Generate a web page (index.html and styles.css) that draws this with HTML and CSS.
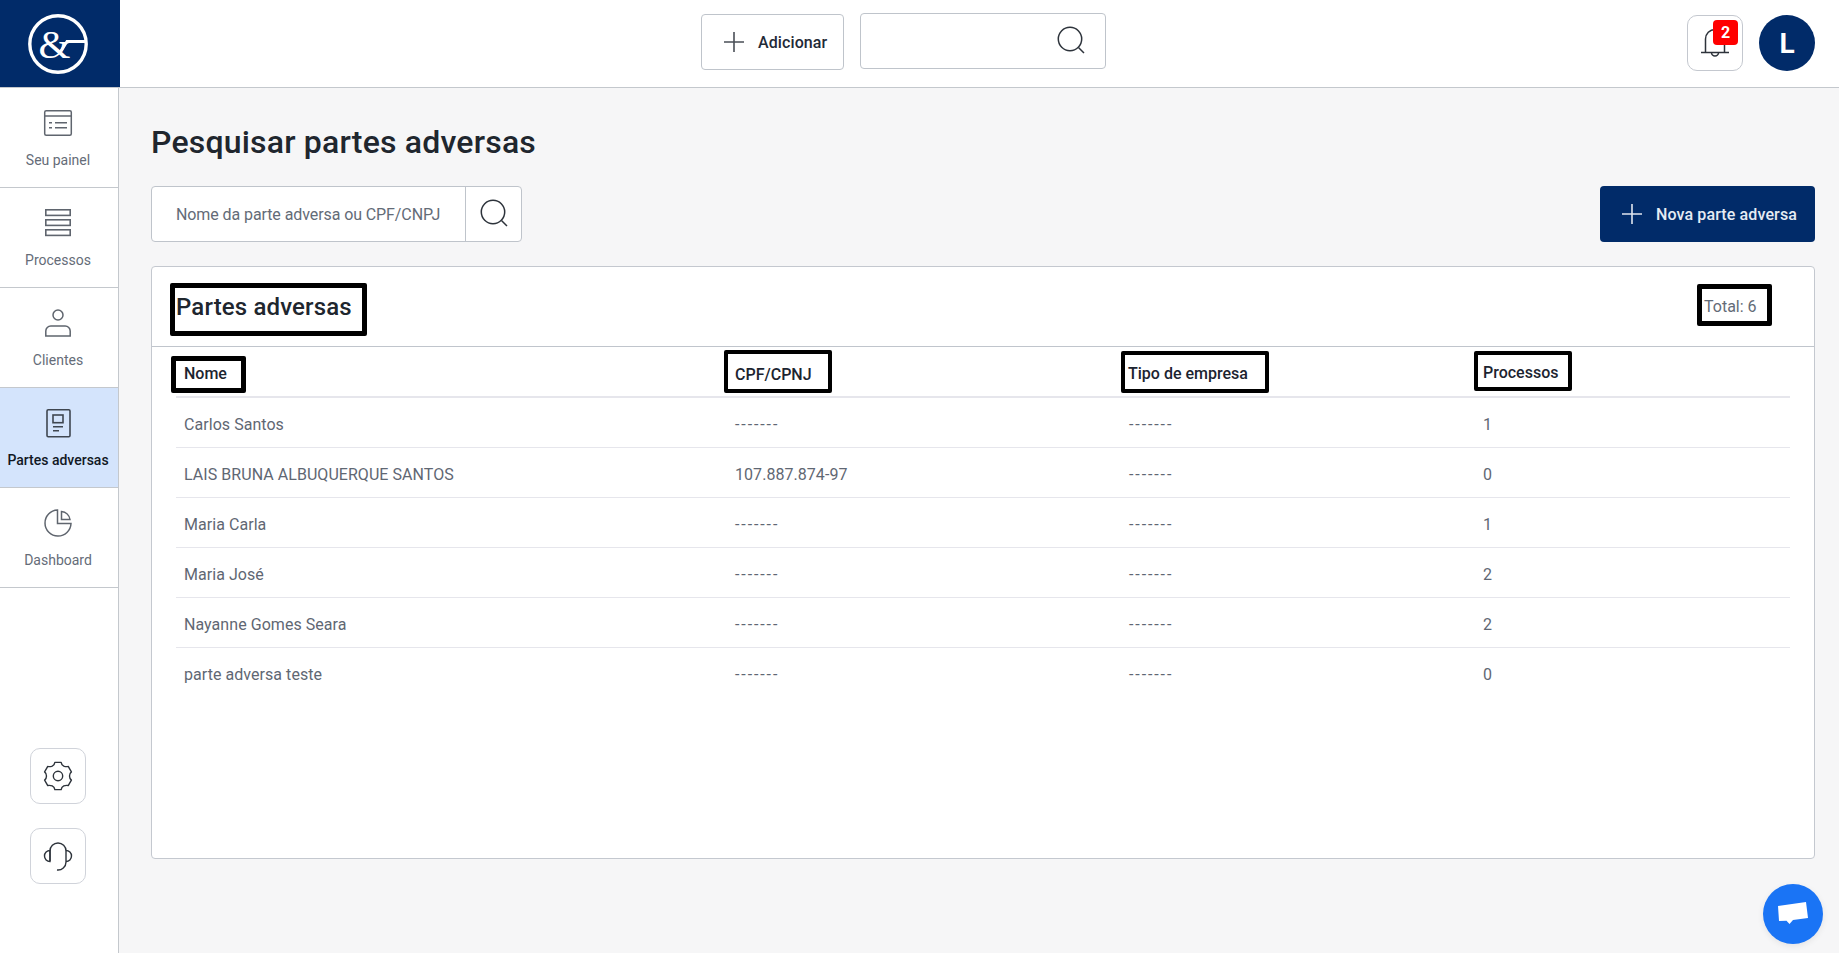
FILE: index.html
```html
<!DOCTYPE html>
<html lang="pt-BR">
<head>
<meta charset="utf-8">
<title>Pesquisar partes adversas</title>
<link rel="stylesheet" href="styles.css">
</head>
<body>
<header class="topbar">
  <div class="logo">
    <svg width="64" height="64" viewBox="0 0 64 64" fill="none">
      <circle cx="32" cy="32" r="28.2" stroke="#fff" stroke-width="3.4"/>
      <text x="12.500" y="46" class="logo-amp">&amp;</text>
      <path d="M35 39 L41 29.500 L59 29.500" stroke="#fff" stroke-width="2.800"/>
    </svg>
  </div>
  <div class="top-center">
    <button class="btn-add">
      <svg class="ic" width="20" height="20" viewBox="0 0 20 20"><path d="M10 0V20M0 10H20" stroke="#4a4f57" stroke-width="1.6"/></svg>
      <span>Adicionar</span>
    </button>
    <div class="top-search">
      <svg width="32" height="32" viewBox="0 0 32 32" fill="none"><circle cx="15" cy="14" r="11.7" stroke="#2d333b" stroke-width="1.5"/><path d="M23.5 22.5L29 28" stroke="#2d333b" stroke-width="1.5"/></svg>
    </div>
  </div>
  <div class="top-right">
    <div class="bell">
      <svg width="32" height="32" viewBox="0 0 32 32" fill="none" stroke="#2d333b" stroke-width="1.5"><path d="M6.500 25V12a9.500 9.500 0 0 1 19 0V25"/><path d="M2 25.5H30"/><path d="M12.5 25.5a3.5 3.5 0 0 0 7 0"/></svg>
      <span class="badge">2</span>
    </div>
    <div class="avatar">L</div>
  </div>
</header>
<div class="body-row">
  <aside class="sidebar">
    <nav class="nav">
      <a class="nav-item">
        <svg width="32" height="32" viewBox="0 0 32 32" fill="none" stroke="#5f656e" stroke-width="1.5"><rect x="2.7" y="3.7" width="26.6" height="24.6" rx="1.5"/><path d="M3 9H29"/><path d="M7 15.700H10M13 15.700H25M7 20.700H10M13 20.700H25"/></svg>
        <span>Seu painel</span>
      </a>
      <a class="nav-item">
        <svg width="32" height="32" viewBox="0 0 32 32" fill="none" stroke="#5f656e" stroke-width="1.6"><rect x="3.8" y="2.8" width="24.4" height="5.6"/><rect x="3.8" y="12.8" width="24.4" height="5.6"/><rect x="3.8" y="22.8" width="24.4" height="5.6"/></svg>
        <span>Processos</span>
      </a>
      <a class="nav-item">
        <svg width="32" height="32" viewBox="0 0 32 32" fill="none" stroke="#5f656e" stroke-width="1.5"><circle cx="16" cy="8" r="5"/><path d="M3.8 29V24a5 5 0 0 1 5-5H23.2a5 5 0 0 1 5 5V29Z"/></svg>
        <span>Clientes</span>
      </a>
      <a class="nav-item active">
        <svg width="32" height="32" viewBox="0 0 32 32" fill="none" stroke="#3f4650" stroke-width="1.6"><rect x="5" y="2.8" width="23" height="27" rx="1.2"/><rect x="11" y="8" width="10" height="7.700"/><path d="M11 19.700H21M11 23.700H17"/></svg>
        <span>Partes adversas</span>
      </a>
      <a class="nav-item">
        <svg width="32" height="32" viewBox="0 0 32 32" fill="none" stroke="#5f656e" stroke-width="1.5"><path d="M15.500 3A13 13 0 1 0 29 16.500H15.500Z"/><path d="M19.500 4.500A9.500 9.500 0 0 1 28 12.500H19.500Z"/></svg>
        <span>Dashboard</span>
      </a>
    </nav>
    <div class="side-tools">
      <div class="tool">
        <svg width="32" height="32" viewBox="0 0 32 32" fill="none" stroke="#2d333b" stroke-width="1.4" stroke-linejoin="round"><path d="M12.85 2.36L19.15 2.36Q19.5 5 21.75 6.04Q24 7 26.24 6.45L29.39 11.91Q27.5 13.5 27.5 16Q27.5 18.5 29.39 20.09L26.24 25.55Q24 25 21.75 25.96Q19.5 27 19.15 29.64L12.85 29.64Q12.5 27 10.25 25.96Q8 25 5.76 25.55L2.61 20.09Q4.5 18.5 4.5 16Q4.5 13.5 2.61 11.91L5.76 6.45Q8 7 10.25 6.04Q12.5 5 12.85 2.36Z"/><circle cx="16" cy="16" r="4.7"/></svg>
      </div>
      <div class="tool">
        <svg width="32" height="32" viewBox="0 0 32 32" fill="none" stroke="#2d333b" stroke-width="1.4"><path d="M8 21V11a8 8 0 0 1 16 0V22a8 8 0 0 1-9 8"/><path d="M8 10.500A5.500 5.500 0 0 0 8 21.500Z"/><path d="M24 10.500A5.500 5.500 0 0 1 24 21.500"/></svg>
      </div>
    </div>
  </aside>
  <main class="main">
    <h1 class="title">Pesquisar partes adversas</h1>
    <div class="actions">
      <div class="search">
        <div class="search-field">Nome da parte adversa ou CPF/CNPJ</div>
        <div class="search-btn">
          <svg width="32" height="32" viewBox="0 0 32 32" fill="none"><circle cx="15" cy="14" r="11.7" stroke="#2d333b" stroke-width="1.5"/><path d="M23.5 22.5L29 28" stroke="#2d333b" stroke-width="1.5"/></svg>
        </div>
      </div>
      <button class="btn-new">
        <svg class="ic" width="20" height="20" viewBox="0 0 20 20"><path d="M10 0V20M0 10H20" stroke="#dfe5ee" stroke-width="1.6"/></svg>
        <span>Nova parte adversa</span>
      </button>
    </div>
    <section class="card">
      <div class="card-head">
        <h2 class="mark mark-title">Partes adversas</h2>
        <div class="mark mark-total">Total: 6</div>
      </div>
      <div class="table-wrap">
        <table class="table">
          <colgroup><col class="c1"><col class="c2"><col class="c3"><col></colgroup>
          <thead>
            <tr>
              <th><span class="mark m-nome">Nome</span></th>
              <th><span class="mark m-cpf">CPF/CPNJ</span></th>
              <th><span class="mark m-tipo">Tipo de empresa</span></th>
              <th><span class="mark m-proc">Processos</span></th>
            </tr>
          </thead>
          <tbody>
            <tr><td>Carlos Santos</td><td class="dash">-------</td><td class="dash">-------</td><td>1</td></tr>
            <tr><td>LAIS BRUNA ALBUQUERQUE SANTOS</td><td>107.887.874-97</td><td class="dash">-------</td><td>0</td></tr>
            <tr><td>Maria Carla</td><td class="dash">-------</td><td class="dash">-------</td><td>1</td></tr>
            <tr><td>Maria José</td><td class="dash">-------</td><td class="dash">-------</td><td>2</td></tr>
            <tr><td>Nayanne Gomes Seara</td><td class="dash">-------</td><td class="dash">-------</td><td>2</td></tr>
            <tr><td>parte adversa teste</td><td class="dash">-------</td><td class="dash">-------</td><td>0</td></tr>
          </tbody>
        </table>
      </div>
    </section>
  </main>
</div>
<div class="chat">
  <svg width="32" height="28" viewBox="0 0 32 28"><path d="M1 6L29 2L31 18L16 20L12.500 24L9.500 20.800L2 21Z" fill="#fff"/></svg>
</div>
</body>
</html>
```
FILE: styles.css
```css
* { box-sizing: border-box; }
html, body { height: 100%; overflow: hidden; }
body {
  margin: 0;
  display: flex;
  flex-direction: column;
  background: #f6f6f7;
  font-family: "Roboto", "Noto Sans", sans-serif;
  font-size: 16px;
  color: #5f6773;
}
button { font: inherit; cursor: pointer; }
svg { display: block; flex: none; }

.topbar {
  flex: none;
  height: 88px;
  display: flex;
  align-items: flex-start;
  background: #fff;
  border-bottom: 1px solid #c4c8cd;
}
.logo {
  width: 120px;
  height: 87px;
  background: #012b69;
  display: flex;
  align-items: center;
  justify-content: center;
}
.logo svg { margin-left: -4px; }
.logo-amp { font-family: "Liberation Serif", serif; font-size: 41px; fill: #fff; }
.top-center {
  display: flex;
  align-items: flex-start;
  gap: 16px;
  margin-left: 581px;
  padding-top: 13px;
}
.btn-add {
  margin-top: 1px;
  width: 143px;
  height: 56px;
  padding: 0 0 0 22px;
  display: flex;
  align-items: center;
  gap: 14px;
  background: #fff;
  border: 1px solid #bfc4cb;
  border-radius: 4px;
  color: #1f2a38;
  font-weight: 500;
  letter-spacing: .1px;
}
.top-search {
  width: 246px;
  height: 56px;
  display: flex;
  align-items: center;
  justify-content: flex-end;
  padding-right: 18px;
  background: #fff;
  border: 1px solid #bfc4cb;
  border-radius: 4px;
}
.top-right {
  margin-left: auto;
  padding: 15px 24px 0 0;
  display: flex;
  gap: 16px;
}
.bell {
  position: relative;
  width: 56px;
  height: 56px;
  display: flex;
  align-items: center;
  justify-content: center;
  background: #fff;
  border: 1px solid #c4c8cf;
  border-radius: 10px;
}
.badge {
  position: absolute;
  top: 4px;
  left: 25px;
  width: 25px;
  height: 25px;
  display: flex;
  align-items: center;
  justify-content: center;
  background: #ff0000;
  border-radius: 4px;
  color: #fff;
  font-weight: 700;
  font-size: 16px;
}
.avatar {
  width: 56px;
  height: 56px;
  border-radius: 50%;
  background: #012b69;
  color: #fff;
  display: flex;
  align-items: center;
  justify-content: center;
  font-weight: 700;
  font-size: 28px;
}

.body-row { flex: 1; display: flex; min-height: 0; }
.sidebar {
  flex: none;
  width: 119px;
  display: flex;
  flex-direction: column;
  background: #fff;
  border-right: 1px solid #c4c8cd;
}
.nav-item {
  height: 100px;
  padding: 19px 2px 0 0;
  display: flex;
  flex-direction: column;
  align-items: center;
  gap: 11px;
  border-bottom: 1px solid #c4c8cd;
  font-size: 14px;
  line-height: 20px;
  color: #656c78;
  white-space: nowrap;
}
.nav-item.active {
  background: #d4e4fc;
  color: #111824;
  font-weight: 500;
}
.side-tools {
  margin-top: auto;
  padding: 0 0 69px 30px;
  display: flex;
  flex-direction: column;
  gap: 24px;
}
.tool {
  width: 56px;
  height: 56px;
  display: flex;
  align-items: center;
  justify-content: center;
  border: 1px solid #d0d3da;
  border-radius: 10px;
}

.main { flex: 1; min-width: 0; padding: 32px 24px 0 32px; }
.title {
  margin: 0 0 22px;
  font-size: 32px;
  line-height: 44px;
  font-weight: 500;
  color: #20262e;
  letter-spacing: .2px;
}
.actions { display: flex; justify-content: space-between; margin-bottom: 24px; }
.search {
  width: 371px;
  height: 56px;
  display: flex;
  background: #fff;
  border: 1px solid #bfc4cb;
  border-radius: 4px;
}
.search-field {
  flex: 1;
  padding-left: 24px;
  display: flex;
  align-items: center;
  color: #636b77;
  white-space: nowrap;
  letter-spacing: -.09px;
}
.search-btn {
  width: 56px;
  display: flex;
  align-items: center;
  justify-content: center;
  border-left: 1px solid #bfc4cb;
}
.btn-new {
  width: 215px;
  height: 56px;
  padding: 0 0 0 22px;
  display: flex;
  align-items: center;
  gap: 14px;
  background: #012b69;
  border: 0;
  border-radius: 4px;
  color: #e6ebf3;
  font-weight: 500;
  white-space: nowrap;
  letter-spacing: .12px;
}
.card {
  height: 593px;
  background: #fff;
  border: 1px solid #c4c8cf;
  border-radius: 4px;
}
.card-head {
  height: 80px;
  padding: 16px 42px 0 18px;
  display: flex;
  justify-content: space-between;
  align-items: flex-start;
  border-bottom: 1px solid #c0c5cc;
}
.mark { border: 4px solid #000; border-radius: 2px; }
.mark-title {
  margin: 0;
  width: 197px;
  height: 53px;
  padding: 0 0 5px 1px;
  display: flex;
  align-items: center;
  font-size: 24px;
  font-weight: 500;
  color: #20262e;
  white-space: nowrap;
  letter-spacing: .15px;
  border-width: 5px;
}
.mark-total {
  margin-top: 1px;
  width: 75px;
  height: 42px;
  padding: 2px 0 0 2px;
  display: flex;
  align-items: center;
  color: #636b77;
  white-space: nowrap;
  border-width: 5px;
}
.table-wrap { padding: 0 24px; }
.table { width: 100%; border-collapse: collapse; table-layout: fixed; }
.c1 { width: 551px; }
.c2 { width: 394px; }
.c3 { width: 354px; }
th {
  height: 50px;
  padding: 0 0 3px;
  vertical-align: bottom;
  border-bottom: 2px solid #e6e6ec;
  text-align: left;
}
th .mark {
  display: flex;
  align-items: center;
  height: 43px;
  font-size: 16px;
  font-weight: 500;
  color: #1c2430;
  white-space: nowrap;
}
.m-nome { width: 75px; height: 37px !important; margin-left: -5px; padding: 0 0 2px 8px; border-width: 5px; }
.m-cpf { width: 108px; margin-left: -3px; padding: 5px 0 0 7px; }
.m-tipo { width: 148px; height: 42px !important; padding: 2px 0 0 3px; }
.m-proc { width: 98px; height: 40px !important; margin: 0 0 2px -1px; padding: 2px 0 0 5px; }
td {
  height: 50px;
  padding: 4px 8px 0;
  border-bottom: 1px solid #e6e6ec;
  color: #5f6773;
  white-space: nowrap;
  letter-spacing: .05px;
}
td.dash { letter-spacing: 1.9px; }
tbody tr:last-child td { border-bottom: 0; }
.chat {
  position: absolute;
  left: 1763px;
  top: 884px;
  width: 60px;
  height: 60px;
  border-radius: 50%;
  background: #1a74f5;
  display: flex;
  align-items: center;
  justify-content: center;
  box-shadow: 0 2px 6px rgba(0,0,0,.08);
}
```
